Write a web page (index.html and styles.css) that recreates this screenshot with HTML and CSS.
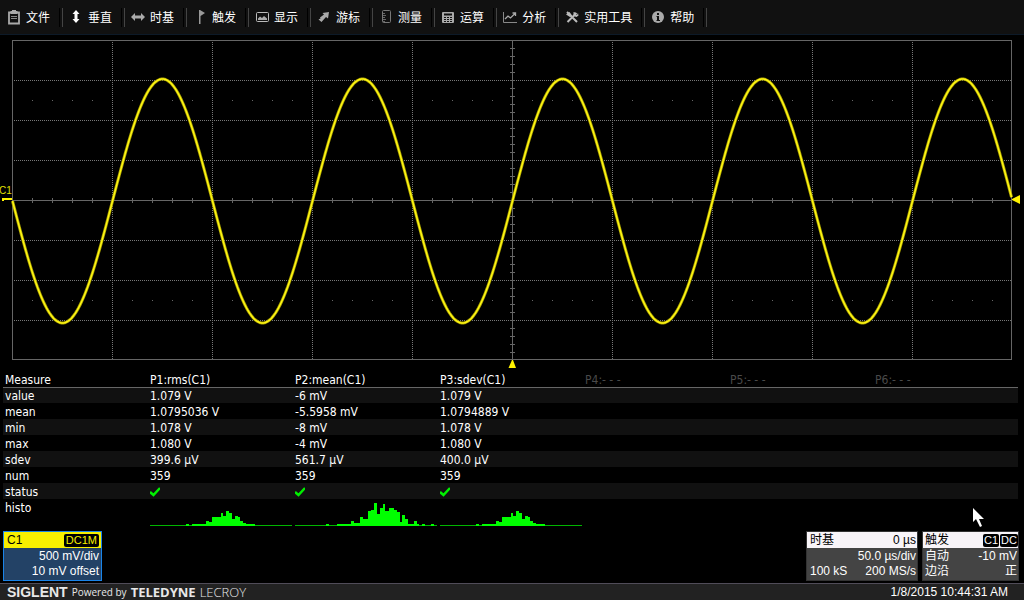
FILE: index.html
```
<!DOCTYPE html>
<html lang="zh-CN">
<head>
    <meta charset="UTF-8">
    <meta name="viewport" content="width=device-width, initial-scale=1.0">
    <title>SIGLENT</title>
    <link rel="stylesheet" href="styles.css">
</head>
<body>
    <nav class="menu">
        <button type="button" class="menu-item">
            <svg class="icon" viewBox="0 0 14 16"><path d="M4 3.500H2v11h10v-11H10" fill="none" stroke="#aaa" stroke-width="1.800"/><path d="M5 1h4v1h1.500v3h-7V2H5z" fill="#aaa"/><path d="M4 7.500h6M4 9.500h6" stroke="#888"/></svg>
            文件
        </button>
        <button type="button" class="menu-item">
            <svg class="icon" viewBox="0 0 14 16"><path d="M7 1l3.500 4H8.500v5h2L7 14l-3.500-4h2V5h-2z" fill="#fff"/></svg>
            垂直
        </button>
        <button type="button" class="menu-item">
            <svg class="icon" viewBox="0 0 14 16"><path d="M0 8l4-4v2.500h6V4l4 4-4 4V9.500H4V12z" fill="#aaa"/></svg>
            时基
        </button>
        <button type="button" class="menu-item">
            <svg class="icon" viewBox="0 0 14 16"><path d="M6 1h1l5 3-4.500 3v8H6z" fill="#999"/></svg>
            触发
        </button>
        <button type="button" class="menu-item">
            <svg class="icon" viewBox="0 0 14 16"><rect x="1.500" y="3.500" width="12" height="9" rx="1" fill="none" stroke="#bbb"/><path d="M3 11V9.500L5 7.500 7 9l2-2 3 2.500V11z" fill="#aaa"/></svg>
            显示
        </button>
        <button type="button" class="menu-item">
            <svg class="icon" viewBox="0 0 14 16"><path d="M12 3l-1 6.500-2-1.500-4.500 5-3-2.500 2-1-.5-1L7 5.500 5.500 4z" fill="#aaa"/></svg>
            游标
        </button>
        <button type="button" class="menu-item">
            <svg class="icon" viewBox="0 0 14 16"><rect x="3.500" y="1.500" width="8" height="12" rx="1" fill="#111" stroke="#777"/><path d="M4 4.500h2M4 6.500h3M4 8.500h2M4 10.500h3M4 12.500h2" stroke="#666"/></svg>
            测量
        </button>
        <button type="button" class="menu-item">
            <svg class="icon" viewBox="0 0 14 16"><rect x="1" y="3" width="12" height="11" rx="1" fill="#aaa"/><path d="M3 4.500h8v2H3zM3 8h2v1H3zM6 8h2v1H6zM9 8h2v1H9zM3 10h2v1H3zM6 10h2v1H6zM9 10h2v1H9zM3 12h2v1H3zM6 12h2v1H6zM9 12h2v1H9z" fill="#111"/></svg>
            运算
        </button>
        <button type="button" class="menu-item">
            <svg class="icon" viewBox="0 0 14 16"><path d="M.5 3v10.500H14" fill="none" stroke="#888"/><path d="M2 10l3-3 2.500 2L12 4.500M9.500 4h3v3" fill="none" stroke="#aaa" stroke-width="1.300"/></svg>
            分析
        </button>
        <button type="button" class="menu-item">
            <svg class="icon" viewBox="0 0 14 16"><path d="M2 3l10 10M11.500 4L2.500 13" stroke="#bbb" stroke-width="2"/><path d="M1 5.500L4.500 3 7 6.500 5 8zM8.500 3l2 .5-.5 2 2 .5 1-2 .5 2.500-2 1.500-3-1z" fill="#bbb"/></svg>
            实用工具
        </button>
        <button type="button" class="menu-item">
            <svg class="icon" viewBox="0 0 14 16"><circle cx="7" cy="8" r="6" fill="#aaa"/><path d="M6 4h2v2H6zM5.500 7H8v4h1v1H5.500v-1h.5V8h-.5z" fill="#111"/></svg>
            帮助
        </button>
    </nav>

    <main class="main">
        <svg class="scope" viewBox="0 35 1024 335">
            <g id="grid">
                <rect class="frame" x="12.500" y="40.500" width="999" height="319"/>
            </g>
            <path id="wave-edge" class="wave-edge"/>
            <path id="wave" class="wave"/>
            <text class="channel" x="-1" y="194">C1</text>
            <path class="marker" d="M2 198h10v2H4v1H2z"/>
            <path class="marker" d="M1012 199l8-4v9l-8-4z"/>
            <path class="marker" d="M512 360h1l3 8h-7.500z"/>
        </svg>

        <table class="measure">
            <thead>
                <tr><th>Measure</th><th>P1:rms(C1)</th><th>P2:mean(C1)</th><th>P3:sdev(C1)</th><th class="off">P4:- - -</th><th class="off">P5:- - -</th><th class="off">P6:- - -</th></tr>
            </thead>
            <tbody>
                <tr><td>value</td><td>1.079 V</td><td>-6 mV</td><td>1.079 V</td><td></td><td></td><td></td></tr>
                <tr><td>mean</td><td>1.0795036 V</td><td>-5.5958 mV</td><td>1.0794889 V</td><td></td><td></td><td></td></tr>
                <tr><td>min</td><td>1.078 V</td><td>-8 mV</td><td>1.078 V</td><td></td><td></td><td></td></tr>
                <tr><td>max</td><td>1.080 V</td><td>-4 mV</td><td>1.080 V</td><td></td><td></td><td></td></tr>
                <tr><td>sdev</td><td>399.6 µV</td><td>561.7 µV</td><td>400.0 µV</td><td></td><td></td><td></td></tr>
                <tr><td>num</td><td>359</td><td>359</td><td>359</td><td></td><td></td><td></td></tr>
                <tr>
                    <td>status</td>
                    <td><svg class="check" viewBox="0 0 10 10"><path d="M0 5l3.500 3L10 1"/></svg></td>
                    <td><svg class="check" viewBox="0 0 10 10"><path d="M0 5l3.500 3L10 1"/></svg></td>
                    <td><svg class="check" viewBox="0 0 10 10"><path d="M0 5l3.500 3L10 1"/></svg></td>
                    <td></td><td></td><td></td>
                </tr>
                <tr class="histo-row">
                    <td>histo</td>
                    <td><svg class="histo" data-histo="narrow" viewBox="0 0 142 24"></svg></td>
                    <td><svg class="histo" data-histo="wide" viewBox="0 0 142 24"></svg></td>
                    <td><svg class="histo" data-histo="narrow" viewBox="0 0 142 24"></svg></td>
                    <td></td><td></td><td></td>
                </tr>
            </tbody>
        </table>

        <svg class="pointer" viewBox="0 0 12 20"><path d="M0 0v14l3-3 4 8 2-1-3-7h5z" fill="#fff"/></svg>
    </main>

    <section class="descriptors">
        <div class="box channel-box">
            <div class="box-head"><span>C1</span><span class="badge">DC1M</span></div>
            <div class="box-row"><span>500 mV/div</span></div>
            <div class="box-row"><span>10 mV offset</span></div>
        </div>
        <div class="box time-box">
            <div class="box-head"><span>时基</span><span>0 µs</span></div>
            <div class="box-row"><span></span><span>50.0 µs/div</span></div>
            <div class="box-row"><span>100 kS</span><span>200 MS/s</span></div>
        </div>
        <div class="box trigger-box">
            <div class="box-head"><span>触发</span><span class="badges"><span class="badge">C1</span><span class="badge">DC</span></span></div>
            <div class="box-row"><span>自动</span><span>-10 mV</span></div>
            <div class="box-row"><span>边沿</span><span>正</span></div>
        </div>
    </section>

    <footer class="footer">
        <div class="brand">
            <span class="siglent">SIGLENT</span>
            <span class="powered">Powered by</span>
            <span class="teledyne">TELEDYNE</span>
            <span class="lecroy">LECROY</span>
        </div>
        <time class="clock">1/8/2015 10:44:31 AM</time>
    </footer>
    <script src="script.js"></script>
</body>
</html>
```
FILE: styles.css
```
* {
    box-sizing: border-box;
}
body {
    display: flex;
    flex-direction: column;
    min-height: 100vh;
    margin: 0;
    background-color: #000;
    color: #fff;
    font-family: "Liberation Sans", "Noto Sans CJK SC", sans-serif;
    font-size: 12px;
}
svg {
    display: block;
}

/* menu */
.menu {
    display: flex;
    height: 35px;
    background-color: #111;
    border-bottom: 1px solid #0d1a28;
}
.menu-item {
    display: flex;
    align-items: center;
    gap: 5px;
    padding: 0 0 0 7px;
    border: none;
    background: none;
    color: #fff;
    font-family: "Noto Sans CJK SC", sans-serif;
    font-size: 12px;
    line-height: 16px;
    white-space: nowrap;
}
.menu-item::after {
    content: "";
    width: 2px;
    height: 19px;
    margin: 0 -1px 0 4px;
    border-left: 1px solid #000;
    border-right: 1px solid #444;
}
.icon {
    width: 14px;
    height: 16px;
}

/* waveform */
.main {
    position: relative;
    flex: 1;
}
.scope {
    width: 100%;
    height: auto;
}
.frame {
    fill: none;
    stroke: #666;
}
.dots {
    stroke: #777;
    stroke-dasharray: 1 1;
}
.axis {
    stroke: #666;
}
.wave,
.wave-edge {
    fill: none;
    stroke-linejoin: round;
}
.wave {
    stroke: #fff614;
    stroke-width: 1.5;
}
.wave-edge {
    stroke: #a8a000;
    stroke-width: 3;
}
.marker {
    fill: #fff200;
}
.channel {
    fill: #e0e000;
    font-size: 10px;
}

/* measure table */
.measure {
    width: calc(100% - 9px);
    margin: 0 6px 0 3px;
    border-collapse: separate;
    border-spacing: 0;
    table-layout: fixed;
    font-family: "DejaVu Sans Condensed", "DejaVu Sans", sans-serif;
    font-size: 12px;
    line-height: 14px;
}
.measure th,
.measure td {
    width: 145px;
    height: 16px;
    padding: 2px 0 0 2px;
    font-weight: normal;
    text-align: left;
    white-space: nowrap;
}
.measure th {
    height: 17px;
    padding-top: 3px;
}
.measure tbody tr:first-child td {
    padding-top: 1px;
    border-top: 1px solid #666;
}
.measure .off {
    color: #4a4a4a;
}
.measure tbody tr:nth-child(odd) {
    background-color: #111;
}
.measure .histo-row td {
    height: 27px;
    vertical-align: top;
}
.check {
    width: 10px;
    height: 10px;
    fill: none;
    stroke: #00f000;
    stroke-width: 2.5;
}
.histo {
    width: 142px;
    height: 24px;
    margin-top: 1px;
    fill: #00ff00;
}
.histo .base {
    fill: #00b400;
}
.pointer {
    position: absolute;
    left: 973px;
    top: 473px;
    width: 12px;
    height: 20px;
}

/* descriptor boxes */
.descriptors {
    display: flex;
    gap: 4px;
    padding: 0 5px 2px 3px;
}
.box {
    height: 50px;
    border: 1px solid #333;
    background-color: #444;
    line-height: 15px;
}
.box-head,
.box-row {
    display: flex;
    justify-content: space-between;
    padding: 0 2px;
}
.box-head {
    align-items: center;
    height: 16px;
    margin-bottom: 1px;
    background-color: #f8f4f8;
    color: #000;
}
.box-row {
    height: 15px;
}
.channel-box {
    width: 99px;
    margin-right: auto;
    border-color: #1a84e8;
    background-color: #234266;
}
.channel-box .box-head {
    padding-left: 3px;
    background-color: #f8f000;
}
.channel-box .box-row {
    justify-content: flex-end;
}
.channel-box .badge {
    padding: 0 2px;
    color: #f8f000;
}
.time-box {
    width: 112px;
}
.time-box .box-row,
.time-box .box-head {
    padding: 0 1px 0 3px;
}
.trigger-box {
    width: 97px;
}
.trigger-box .box-row {
    padding-right: 1px;
}
.trigger-box .box-head {
    padding-right: 0;
}
.badges {
    display: flex;
    gap: 1px;
}
.badge {
    padding: 0 1px;
    border-radius: 2px;
    background-color: #000;
    color: #fff;
    font-size: 11px;
    line-height: 13px;
}

/* footer */
.footer {
    display: flex;
    justify-content: space-between;
    align-items: center;
    height: 17px;
    padding: 0 16px 0 7px;
    border-top: 1px solid #504c58;
    background-color: #222;
    line-height: 16px;
}
.brand {
    display: flex;
    align-items: center;
    gap: 4px;
    color: #e8e8e8;
    font-family: "Open Sans", sans-serif;
}
.siglent {
    font-family: "Liberation Sans", sans-serif;
    font-size: 14px;
    font-weight: bold;
}
.powered {
    font-size: 10px;
}
.teledyne {
    font-size: 13px;
    font-weight: bold;
}
.lecroy {
    font-size: 13px;
    font-weight: 300;
}
```
FILE: script.js
```
const SVG_NS = 'http://www.w3.org/2000/svg';

const histograms = {
    // [x, width, height]
    narrow: [
        [36, 3, 2], [42, 14, 2], [56, 3, 5], [59, 3, 4], [62, 9, 9], [71, 2, 13], [73, 3, 10],
        [76, 3, 15], [79, 3, 13], [82, 3, 7], [85, 3, 10], [88, 2, 9], [90, 3, 5], [93, 3, 3], [96, 9, 2]
    ],
    wide: [
        [31, 3, 2], [42, 14, 2], [56, 3, 5], [59, 6, 3], [65, 3, 9], [68, 5, 7], [73, 3, 15],
        [76, 3, 16], [79, 3, 23], [82, 3, 12], [85, 3, 18], [88, 2, 22], [90, 4, 15], [94, 5, 18],
        [99, 3, 16], [102, 3, 14], [105, 2, 4], [107, 3, 11], [110, 3, 7], [113, 6, 2], [119, 3, 5],
        [122, 2, 2], [127, 3, 2], [136, 3, 2]
    ]
};

function add(parent, name, attrs) {
    const el = document.createElementNS(SVG_NS, name);
    for (const key in attrs) {
        el.setAttribute(key, attrs[key]);
    }
    parent.appendChild(el);
}

function drawGrid() {
    const grid = document.getElementById('grid');
    let dots = '';
    for (let x = 112; x < 1012; x += 100) {
        if (x !== 512) dots += `M${x + 0.5} 42V359`;
    }
    for (let y = 80; y < 360; y += 40) {
        if (y !== 200) dots += `M14 ${y + 0.5}H1011`;
    }
    add(grid, 'path', { class: 'dots', d: dots });

    let axis = 'M12 200.5H1012M512.5 40V360';
    for (let x = 32; x < 1012; x += 20) {
        axis += `M${x + 0.5} 198V203`;
        if ((x - 12) % 100 !== 0) {
            axis += `M${x} 100.5h1M${x} 300.5h1`;
        }
    }
    for (let y = 48; y < 360; y += 8) {
        axis += `M510 ${y + 0.5}H515`;
    }
    add(grid, 'path', { class: 'axis', d: axis });
}

function drawWave() {
    const points = [];
    for (let x = 12; x < 1012; x++) {
        const y = 201 + 122 * Math.sin((x - 12) * Math.PI / 100);
        points.push(`${x + 0.5} ${y.toFixed(1)}`);
    }
    const d = 'M' + points.join('L');
    document.getElementById('wave-edge').setAttribute('d', d);
    document.getElementById('wave').setAttribute('d', d);
}

function drawHistograms() {
    document.querySelectorAll('.histo').forEach(svg => {
        add(svg, 'rect', { class: 'base', x: 0, y: 23, width: 142, height: 1 });
        histograms[svg.dataset.histo].forEach(([x, width, height]) => {
            add(svg, 'rect', { x, y: 24 - height, width, height });
        });
    });
}

drawGrid();
drawWave();
drawHistograms();
```
